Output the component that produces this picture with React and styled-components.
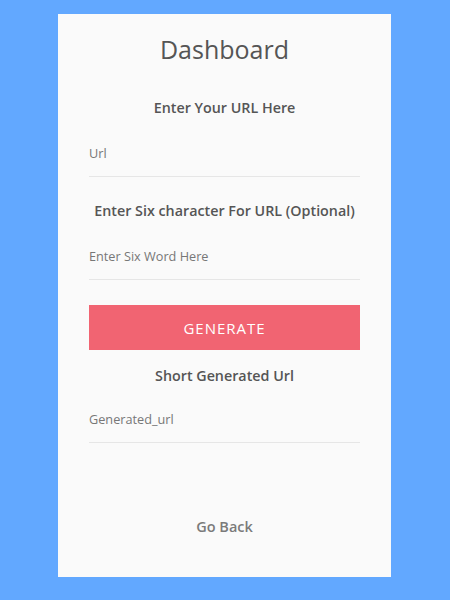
import React from "react";
import styled, { createGlobalStyle } from "styled-components";

const Global = createGlobalStyle`
  html, body { margin: 0; padding: 0; }
  body { background: #62a8ff; font-family: "Open Sans", "Noto Sans", sans-serif; }
`;

const Page = styled.div`
  width: 450px;
  height: 600px;
  display: flex;
  padding: 14px 0 0 58px;
  box-sizing: border-box;
`;

const Card = styled.div`
  width: 333px;
  height: 563px;
  background: #fafafa;
  box-sizing: border-box;
  padding: 0 31px;
  display: flex;
  flex-direction: column;
`;

const Title = styled.h1`
  margin: 19px 0 0;
  font-size: 25px;
  line-height: 32px;
  font-weight: 400;
  color: #555;
  text-align: center;
`;

const Label = styled.div`
  margin-top: ${(p) => p.$mt}px;
  font-size: 14.3px;
  line-height: 20px;
  font-weight: 600;
  color: #555;
  text-align: center;
`;

const Input = styled.input`
  margin-top: ${(p) => p.$mt}px;
  width: 100%;
  height: 44px;
  box-sizing: border-box;
  border: none;
  border-bottom: 1px solid #e6e6e6;
  background: transparent;
  padding: 0 1px 3px 0;
  font-family: inherit;
  font-size: 12.7px;
  color: #555;
  outline: none;
  &::placeholder { color: #777; }
`;

const Button = styled.button`
  margin-top: 25px;
  width: 100%;
  height: 45px;
  border: none;
  background: #f16472;
  color: #fff;
  font-family: inherit;
  font-size: 15px;
  letter-spacing: 1px;
  text-transform: uppercase;
  cursor: pointer;
`;

const Back = styled.div`
  margin-top: 74px;
  text-align: center;
  font-size: 14.5px;
  font-weight: 600;
  color: #7a7a7a;
`;

export default function App() {
  return (
    <>
      <Global />
      <Page>
        <Card>
          <Title>Dashboard</Title>
          <Label $mt={33}>Enter Your URL Here</Label>
          <Input $mt={15} placeholder="Url" />
          <Label $mt={24}>Enter Six character For URL (Optional)</Label>
          <Input $mt={15} placeholder="Enter Six Word Here" />
          <Button>Generate</Button>
          <Label $mt={16}>Short Generated Url</Label>
          <Input $mt={13} placeholder="Generated_url" />
          <Back>Go Back</Back>
        </Card>
      </Page>
    </>
  );
}
